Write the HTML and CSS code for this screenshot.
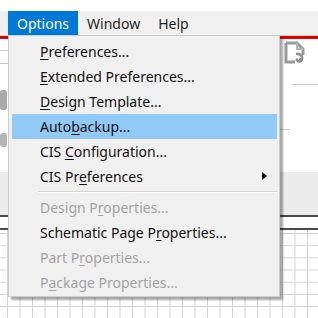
FILE: index.html
```html
<!DOCTYPE html>
<html lang="en">
<head>
    <meta charset="UTF-8">
    <title>Options menu</title>
    <link rel="stylesheet" href="styles.css">
</head>
<body>
    <div class="app">
        <div class="topstrip"></div>
        <div class="menubar">
            <span class="menubar-item active">Options</span>
            <span class="menubar-item">Window</span>
            <span class="menubar-item">Help</span>
        </div>
        <div class="redline"></div>
        <div class="panel">
            <div class="panel-left">
                <div class="hline"></div>
                <div class="hline"></div>
                <div class="blob blob-a"></div>
                <div class="blob blob-b"></div>
            </div>
            <div class="panel-right">
                <svg class="page-icon" width="24" height="24" viewBox="0 0 24 24">
                    <path d="M3 2 H14 L20 8 V14" fill="none" stroke="#9a9a9a" stroke-width="3"/>
                    <path d="M3 2 V21 H12" fill="none" stroke="#9a9a9a" stroke-width="3"/>
                    <path d="M14 2 V8 H20" fill="none" stroke="#b5b5b5" stroke-width="2"/>
                    <path d="M13 13 C20 12 21 19 16 21 M16 21 L13 18 M16 21 L18 17" fill="none" stroke="#8f8f8f" stroke-width="2.5"/>
                </svg>
                <div class="rline"></div>
                <div class="rline short"></div>
            </div>
        </div>
        <div class="greybar"></div>
        <div class="darkline"></div>
        <div class="tabgap"></div>
        <div class="darkline"></div>
        <div class="grid"></div>

        <div class="menu">
            <div class="menu-item"><u>P</u>references...</div>
            <div class="menu-item"><u>E</u>xtended Preferences...</div>
            <div class="menu-item"><u>D</u>esign Template...</div>
            <div class="menu-item hover">Auto<u>b</u>ackup...</div>
            <div class="menu-item">CIS <u>C</u>onfiguration...</div>
            <div class="menu-item">CIS Pr<u>e</u>ferences<span class="submenu-arrow"></span></div>
            <div class="menu-sep"></div>
            <div class="menu-item disabled">Design P<u>r</u>operties...</div>
            <div class="menu-item">Schematic Page P<u>r</u>operties...</div>
            <div class="menu-item disabled">Part P<u>r</u>operties...</div>
            <div class="menu-item disabled">P<u>a</u>ckage Properties...</div>
        </div>
    </div>
</body>
</html>
```

FILE: styles.css
```css
/* Reset */
* {
    margin: 0;
    padding: 0;
    box-sizing: border-box;
}

body {
    width: 318px;
    height: 318px;
    overflow: hidden;
    background: #ffffff;
    font-family: "Noto Sans", "Noto Sans CJK KR", sans-serif;
    font-size: 14px;
    color: #1a1a1a;
}

.app {
    position: relative;
    width: 318px;
    height: 318px;
    display: flex;
    flex-direction: column;
}

.topstrip {
    height: 11px;
    background: #ffffff;
}

/* Menu bar */
.menubar {
    height: 24px;
    display: flex;
    align-items: stretch;
    padding-left: 8px;
    background: #f0f0f0;
}

.menubar-item {
    display: flex;
    align-items: center;
    padding: 0 9px;
    color: #1e1e1e;
}

.menubar-item.active {
    background: #0078d7;
    color: #ffffff;
}

.redline {
    height: 4px;
    border-top: 1px solid #d6d6d6;
    background: #dc0000;
}

/* Toolbar panel behind the menu */
.panel {
    height: 133px;
    display: flex;
    justify-content: space-between;
    background: #ffffff;
}

.panel-left {
    width: 8px;
    display: flex;
    flex-direction: column;
    padding-top: 11px;
    gap: 12px;
}

.hline {
    height: 1px;
    background: #c8c8c8;
}

.blob {
    width: 7px;
    border-radius: 3px;
    background: #a9a9a9;
}

.blob-a {
    height: 20px;
    margin-top: 14px;
}

.blob-b {
    height: 14px;
    margin-top: 11px;
    background: #b4b4b4;
}

.panel-right {
    width: 38px;
    display: flex;
    flex-direction: column;
    align-items: flex-end;
    padding-top: 2px;
}

.page-icon {
    align-self: flex-start;
    margin-left: 3px;
}

.rline {
    width: 26px;
    height: 1px;
    margin-top: 19px;
    background: #d0d0d0;
}

.rline.short {
    width: 10px;
    margin-top: 44px;
    align-self: flex-start;
}

.greybar {
    height: 43px;
    background: #ececec;
}

.darkline {
    height: 2px;
    background: #4a4a4a;
}

.tabgap {
    height: 11px;
    background: #ffffff;
}

.grid {
    flex: 1;
    background-color: #ffffff;
    background-image:
        linear-gradient(to right, #d2d2d2 1px, transparent 1px),
        linear-gradient(to bottom, #d2d2d2 1px, transparent 1px);
    background-size: 12.5px 12.2px;
    background-position: 7px 3px;
}

/* Drop-down menu */
.menu {
    position: absolute;
    left: 8px;
    top: 35px;
    width: 272px;
    height: 262px;
    padding: 3px 2px 2px 3px;
    background: #f0f0f0;
    border: 1px solid #cccccc;
    box-shadow: 3px 3px 2px rgba(0, 0, 0, 0.35);
}

.menu-item {
    position: relative;
    height: 25px;
    line-height: 25px;
    padding-left: 28px;
    color: #111111;
    white-space: nowrap;
}

.menu-item u {
    text-underline-offset: 2px;
}

.menu-item.hover {
    background: #91c9f7;
}

.menu-item.disabled {
    color: #a3a3a3;
}

.submenu-arrow {
    position: absolute;
    right: 10px;
    top: 8px;
    width: 0;
    height: 0;
    border-top: 4px solid transparent;
    border-bottom: 4px solid transparent;
    border-left: 5px solid #000000;
}

.menu-sep {
    height: 6px;
    margin-left: 26px;
    border-top: 2px solid transparent;
    background: linear-gradient(to bottom, #d4d4d4 0, #d4d4d4 1px, #ffffff 1px, #ffffff 2px, transparent 2px);
    background-clip: padding-box;
}
```
